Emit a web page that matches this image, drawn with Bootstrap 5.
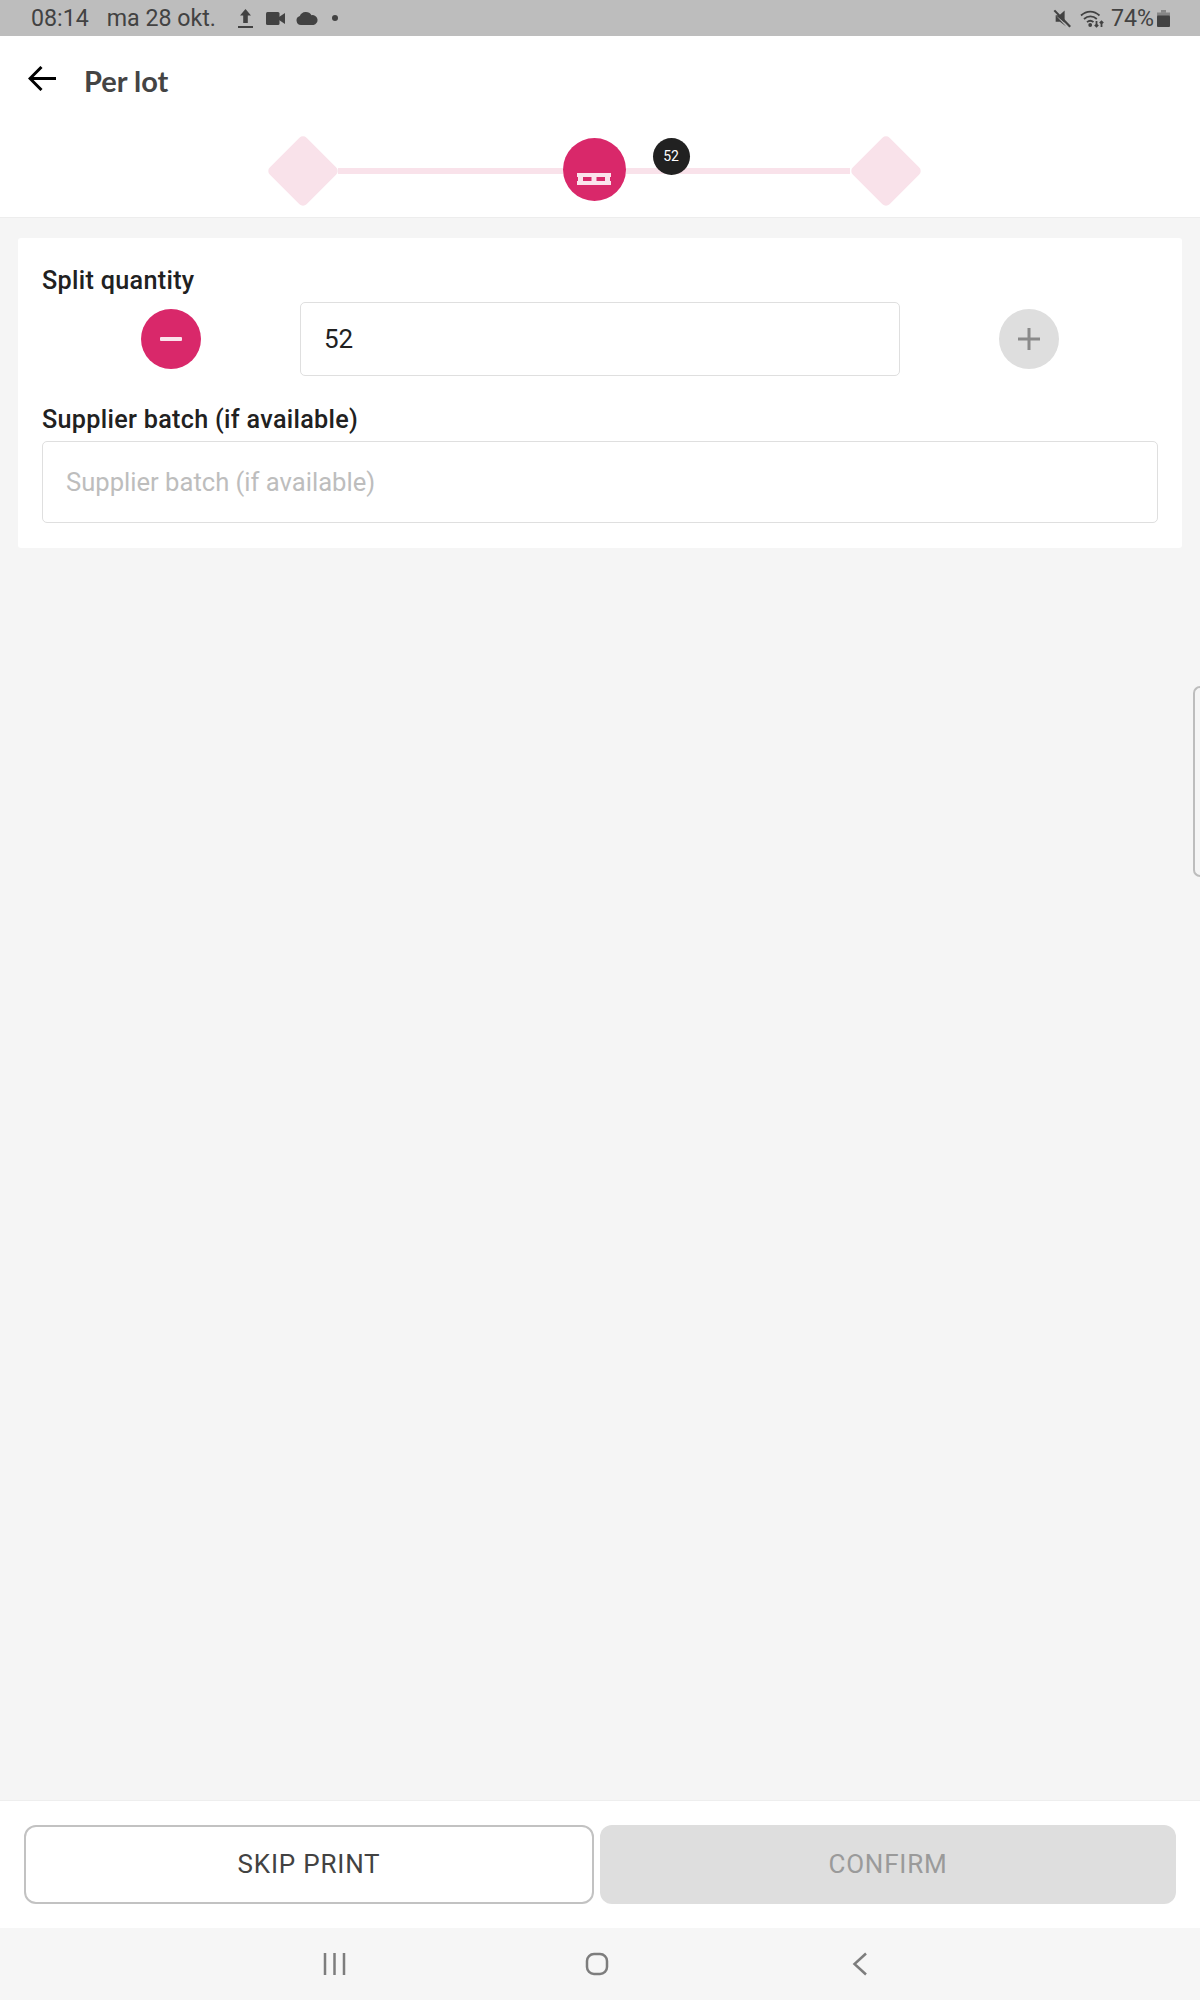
<!DOCTYPE html>
<html lang="en">
<head>
<meta charset="utf-8">
<title>Per lot</title>
<link href="https://cdn.jsdelivr.net/npm/bootstrap@5.3.0/dist/css/bootstrap.min.css" rel="stylesheet">
<style>
body{font-family:Roboto,"Liberation Sans",sans-serif;background:#f5f5f5;width:1200px;height:2000px;overflow:hidden;color:#212121}
.screen{height:2000px}
.status-strip{height:36px;background:#bdbdbd;color:#424242;font-size:23.2px;line-height:36px;padding:0 30px 0 31px}
.status-strip svg{display:block;fill:#424242}
.st-date{margin-left:18px;margin-right:22px}
.ic-video{margin-left:13px}
.ic-cloud{margin-left:11px}
.ic-dot{margin-left:14px}
.top-head{background:#fff;height:182px;border-bottom:1px solid #ededed}
.title-row{height:89px;padding:30px 0 0 28px}
.page-title{font-family:Lato,sans-serif;font-weight:700;font-size:29px;line-height:30px;color:#444;margin:0 0 0 28px}
.stepper{padding:0 279px 0 267px;height:92px}
.stepper-track{margin-top:10px}
.dia-box{width:71px;height:71px;flex:none}
.dia{width:52px;height:52px;background:#f9e2ea;transform:rotate(45deg);border-radius:5px}
.step-line{height:6px;background:#f9e2ea;flex:1 1 0}
.step-current{width:63px;height:63px;background:#d9286a;flex:none;padding-top:35px;margin-top:-2px}
.qty-badge{width:37px;height:37px;background:#212121;color:#fff;font-size:14px;right:-64px;top:0}
.panel{background:#fff;margin:20px 18px 0;padding:28px 24px 24px;height:310px;border-radius:3px}
.fld-label{font-size:25.2px;font-weight:500;line-height:30px;letter-spacing:.3px;color:#212121;margin:0 0 6px}
.qty-row{height:74px;margin-bottom:29px}
.round-btn{width:60px;height:60px;padding:0;flex:none;border:0}
.minus-btn{background:#d9286a;margin-left:99px;margin-right:99px}
.plus-btn{background:#dedede;margin-left:99px}
.qty-input{width:600px;height:74px;flex:none;font-size:26px;padding:0 23px;border:1.5px solid #dfdfdf;border-radius:5px;color:#212121}
.batch-input{height:82px;font-size:25.6px;padding:0 23px;border:1.5px solid #dfdfdf;border-radius:5px}
.batch-input::placeholder{color:#bdbdbd}
.fld-label.second{margin-bottom:6px}
.side-handle{position:absolute;right:0;top:686px;width:7px;height:191px;border:2px solid #bdbdbd;border-right:0;border-radius:7px 0 0 7px}
.foot-bar{background:#fff;height:128px;border-top:1px solid #eee;padding:24px 22px 24px 24px;gap:6px}
.act-btn{height:79px;font-size:26px;letter-spacing:.8px;border-radius:12px;flex:none}
.act-skip{width:570px;background:#fff;border:2px solid #c2c2c2;color:#424242}
.act-confirm{width:576px;background:#dedede;border:0;color:#9a9a9a}
.act-confirm:disabled{background:#dedede;color:#9a9a9a;opacity:1}
.nav-strip{height:72px;background:#f6f6f6;padding-left:323px}
.nav-strip svg{display:block;fill:none;stroke:#7d7d7d}
.nav-home{margin-left:239px}
.nav-back{margin-left:243px}
.ic-wifi{margin-left:8px;fill:none!important;stroke:#424242}
.st-pct{margin-left:7px}
.ic-batt{margin-left:3px}
</style>
</head>
<body>
<div class="screen d-flex flex-column position-relative">
  <div class="status-strip d-flex align-items-center flex-none">
    <span>08:14</span>
    <span class="st-date">ma 28 okt.</span>
    <svg width="15" height="20" viewBox="0 0 15 20"><path d="M7.500 1 13 7.500H9.800V15H5.200V7.500H2z"/><rect x="0" y="18" width="15" height="2"/></svg>
    <svg class="ic-video" width="19" height="13" viewBox="0 0 19 13"><rect width="13.500" height="13" rx="1.500"/><path d="M13 5l6-4v11l-6-4z"/></svg>
    <svg class="ic-cloud" width="22" height="13" viewBox="0 0 22 13"><path d="M5 13a4.600 4.600 0 0 1-1.200-9A6.600 6.600 0 0 1 15.500 3.200 5 5 0 0 1 17.500 13z"/></svg>
    <svg class="ic-dot" width="6" height="6" viewBox="0 0 6 6"><circle cx="3" cy="3" r="3"/></svg>
    <div class="ms-auto d-flex align-items-center">
      <svg width="20" height="19" viewBox="0 0 18 18"><path d="M3 6H6.500L11.500 1.500V13zM3 6v6h4L13 16.500"/><path d="M1 2 2.500.8 17.500 16l-1.500 1.500z"/></svg>
      <svg class="ic-wifi" width="24" height="19" viewBox="0 0 24 19" stroke-width="1.800"><path d="M1 6.500C6.500 1.200 14 1.200 19.500 6.500M4 10c3.800-3.500 9-3.500 12.800 0M7 13.200c2-1.800 4.500-1.800 6.500 0"/><circle cx="10.200" cy="16" r="1" fill="#424242"/><path d="M16.500 12v5.500M14.800 15.800l1.700 1.700 1.700-1.700M21.500 18v-5.500M19.800 14.200l1.700-1.700 1.700 1.700"/></svg>
      <span class="st-pct">74%</span>
      <svg class="ic-batt" width="13" height="17" viewBox="0 0 13 17"><path d="M4 0h5v2.500H4z" opacity=".45"/><rect y="2.500" width="13" height="4" opacity=".45"/><rect y="5.500" width="13" height="11.500" rx="1"/></svg>
    </div>
  </div>

  <header class="top-head flex-none">
    <div class="title-row d-flex align-items-start">
      <svg width="28" height="25" viewBox="0 0 28 25" fill="none" stroke="#000" stroke-width="3"><path d="M28 12.500H2M13.500 1 2 12.500 13.500 24"/></svg>
      <h1 class="page-title">Per lot</h1>
    </div>
    <div class="stepper d-flex align-items-start">
      <div class="stepper-track d-flex align-items-center w-100">
        <div class="dia-box d-flex align-items-center justify-content-center"><div class="dia"></div></div>
        <div class="step-line"></div>
        <div class="step-current rounded-circle position-relative d-flex justify-content-center">
          <svg width="34" height="12" viewBox="0 0 34 12" fill="#fbe3ec"><rect width="34" height="4"/><rect y="8" width="34" height="4"/><rect x="1" y="3" width="5" height="6"/><rect x="14.500" y="3" width="5" height="6"/><rect x="28" y="3" width="5" height="6"/></svg>
          <span class="qty-badge position-absolute rounded-circle d-flex align-items-center justify-content-center">52</span>
        </div>
        <div class="step-line"></div>
        <div class="dia-box d-flex align-items-center justify-content-center"><div class="dia"></div></div>
      </div>
    </div>
  </header>

  <main class="flex-grow-1">
    <form class="panel">
      <label class="fld-label d-block" for="qty">Split quantity</label>
      <div class="qty-row d-flex align-items-center">
        <button type="button" class="round-btn minus-btn btn rounded-circle d-flex align-items-center justify-content-center" aria-label="Decrease">
          <svg width="22" height="4" viewBox="0 0 22 4"><rect width="22" height="4" rx="1" fill="#fbe3ec"/></svg>
        </button>
        <input id="qty" class="qty-input form-control" type="text" value="52">
        <button type="button" class="round-btn plus-btn btn rounded-circle d-flex align-items-center justify-content-center" aria-label="Increase">
          <svg width="22" height="22" viewBox="0 0 22 22" fill="#8a8a8a"><rect y="9.500" width="22" height="3"/><rect x="9.500" width="3" height="22"/></svg>
        </button>
      </div>
      <label class="fld-label second d-block" for="batch">Supplier batch (if available)</label>
      <input id="batch" class="batch-input form-control" type="text" placeholder="Supplier batch (if available)">
    </form>
  </main>

  <div class="side-handle"></div>

  <footer class="foot-bar d-flex flex-none">
    <button type="button" class="act-btn act-skip btn">SKIP PRINT</button>
    <button type="button" class="act-btn act-confirm btn" disabled>CONFIRM</button>
  </footer>

  <nav class="nav-strip d-flex align-items-center flex-none">
    <svg width="23" height="22" viewBox="0 0 23 22" stroke-width="2.500"><path d="M2 0v22M11.500 0v22M21 0v22"/></svg>
    <svg class="nav-home" width="24" height="24" viewBox="0 0 24 24" stroke-width="2.500"><rect x="2" y="2" width="20" height="20" rx="7"/></svg>
    <svg class="nav-back" width="16" height="24" viewBox="0 0 16 24" stroke-width="2.500"><path d="M14 1.500 2.500 12 14 22.500"/></svg>
  </nav>
</div>
<script src="https://cdn.jsdelivr.net/npm/bootstrap@5.3.0/dist/js/bootstrap.bundle.min.js"></script>
</body>
</html>
